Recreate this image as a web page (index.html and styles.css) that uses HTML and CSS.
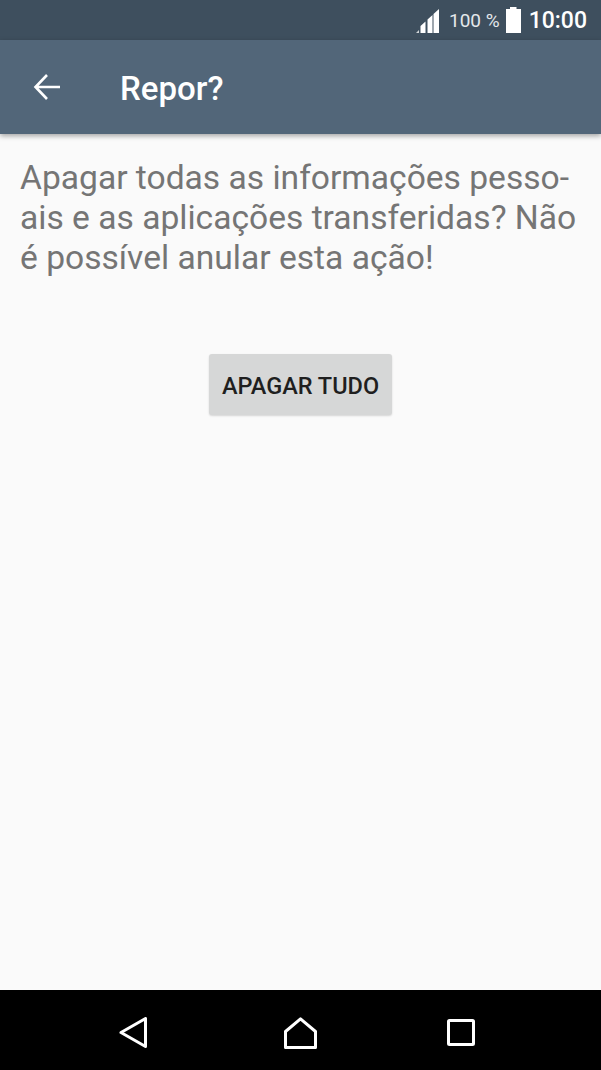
FILE: index.html
```html
<!DOCTYPE html>
<html lang="pt">
<head>
    <meta charset="UTF-8">
    <meta name="viewport" content="width=device-width, initial-scale=1.0">
    <title>Repor?</title>
    <link rel="stylesheet" href="styles.css">
</head>
<body>
    <div id="phone">
        <div class="status-bar">
            <svg class="signal-icon" width="23" height="24" viewBox="0 0 23 24">
                <path d="M0 24 L3 21 V24 Z" fill="#fff" opacity="0.75"/>
                <path d="M4.5 24 V17 L9.5 12.5 V24 Z M11.5 24 V10.5 L16.5 6 V24 Z M17.5 24 V5 L23 0 V24 Z" fill="#fff"/>
            </svg>
            <span class="battery-text">100 %</span>
            <svg class="battery-icon" width="15" height="26" viewBox="0 0 15 26">
                <path d="M4 0 H10.5 V2 H15 V26 H0 V2 H4 Z" fill="#fff"/>
            </svg>
            <span class="clock">10:00</span>
        </div>
        <div class="app-bar">
            <svg class="back-icon" width="28" height="28" viewBox="0 0 28 28">
                <path d="M27 14 H2.5 M14 2 L2.5 14 L14 26" fill="none" stroke="#fff" stroke-width="2.6"/>
            </svg>
            <h1 class="title">Repor?</h1>
        </div>
        <div class="content">
            <p class="message">Apagar todas as informações pesso-<br>ais e as aplicações transferidas? Não<br>é possível anular esta ação!</p>
            <div class="actions">
                <button class="erase-btn">APAGAR TUDO</button>
            </div>
        </div>
        <div class="nav-bar">
            <svg class="nav-back" width="28" height="31" viewBox="0 0 28 31">
                <path d="M2 15.5 L26.5 1.5 V29.5 Z" fill="none" stroke="#fff" stroke-width="3" stroke-linejoin="round"/>
            </svg>
            <svg width="33" height="32" viewBox="0 0 33 32">
                <path d="M16.5 1.8 L31.5 14.5 V30.5 H1.5 V14.5 Z" fill="none" stroke="#fff" stroke-width="3" stroke-linejoin="round"/>
            </svg>
            <svg width="28" height="27" viewBox="0 0 28 27">
                <rect x="1.5" y="1.5" width="25" height="24" rx="1" fill="none" stroke="#fff" stroke-width="3"/>
            </svg>
        </div>
    </div>
</body>
</html>
```

FILE: styles.css
```css
body, html {
    height: 100%;
    margin: 0;
    font-family: Roboto, "Liberation Sans", sans-serif;
    background-color: #fafafa;
}

#phone {
    display: flex;
    flex-direction: column;
    height: 1070px;
    overflow: hidden;
}

.status-bar {
    display: flex;
    align-items: center;
    justify-content: flex-end;
    height: 40px;
    flex-shrink: 0;
    padding-right: 14px;
    color: #fff;
    background-color: #3e4f5e;
}

.signal-icon {
    margin-top: 2px;
    margin-right: 10px;
}

.battery-text {
    font-size: 19px;
    color: #e4e8eb;
    margin-right: 6px;
}

.battery-icon {
    margin-right: 8px;
}

.clock {
    font-size: 23px;
    font-weight: 500;
}

.app-bar {
    display: flex;
    align-items: center;
    height: 94px;
    flex-shrink: 0;
    padding-left: 33px;
    background-color: #526679;
    box-shadow: 0 2px 5px rgba(0, 0, 0, 0.35);
    position: relative;
}

.back-icon {
    margin-right: 59px;
}

.title {
    margin: 2px 0 0;
    font-size: 33px;
    font-weight: 500;
    color: #fff;
}

.content {
    flex: 1;
    padding: 24px 20px 0;
}

.message {
    margin: 0;
    font-size: 33.6px;
    line-height: 40px;
    color: #757575;
}

.actions {
    display: flex;
    justify-content: center;
    margin-top: 76px;
}

.erase-btn {
    width: 183px;
    height: 61px;
    padding: 2px 0 0;
    border: none;
    border-radius: 3px;
    font-family: inherit;
    font-size: 23.5px;
    font-weight: 500;
    color: #1f1f1f;
    background-color: #d6d7d7;
    box-shadow: 0 1px 2px rgba(0, 0, 0, 0.15);
}

.nav-bar {
    display: flex;
    align-items: center;
    gap: 130px;
    height: 75px;
    flex-shrink: 0;
    padding: 5px 0 0 119px;
    background-color: #000;
}

.nav-back {
    margin-right: 7px;
}
```
